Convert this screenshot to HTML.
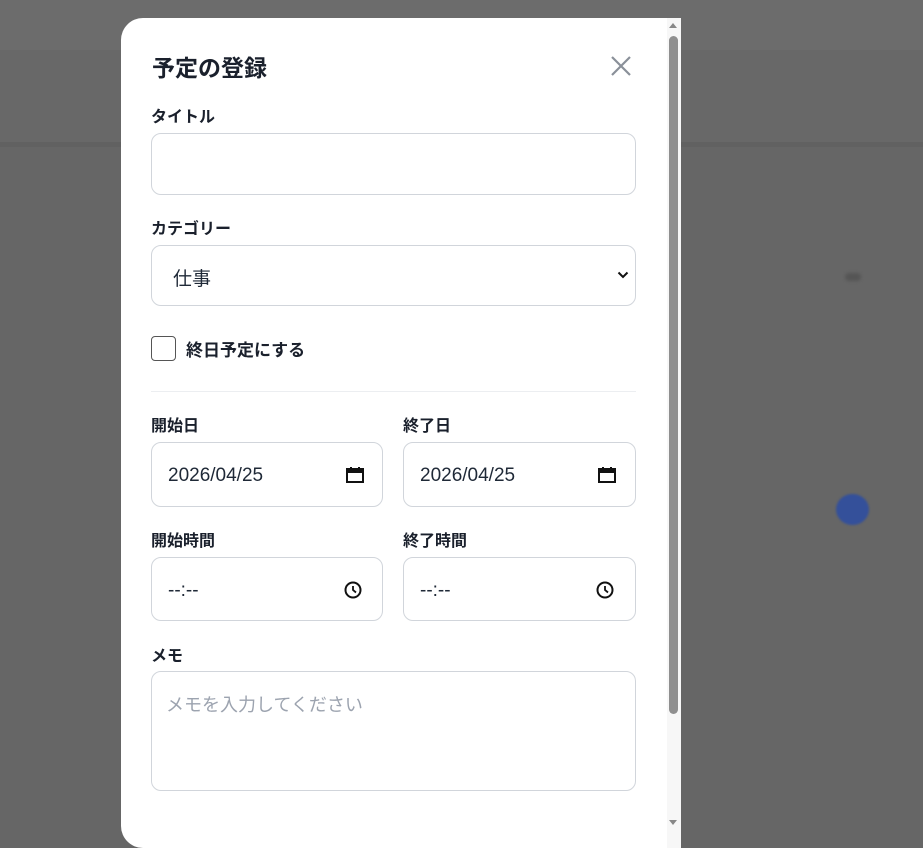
<!DOCTYPE html>
<html><head><meta charset="utf-8"><style>
*{box-sizing:border-box;margin:0;padding:0}
body{width:923px;height:830px;overflow:hidden;background:#666;font-family:"Liberation Sans","Noto Sans CJK JP",sans-serif;position:relative}
.a{position:absolute}
.modal{left:121px;top:18px;width:560px;height:830px;background:#fff;border-radius:22px 0 0 22px;overflow:hidden}
.lbl{position:absolute;font-size:16px;font-weight:bold;color:#1a202c}
.in{position:absolute;border:1px solid #d1d5db;border-radius:10px;background:#fff;font-size:19px;color:#1f2937}
</style></head><body>
<div class="a" style="left:0;top:0;width:923px;height:50px;background:#6c6c6c"></div>
<div class="a" style="left:0;top:50px;width:923px;height:92px;background:#686868"></div>
<div class="a" style="left:0;top:142px;width:923px;height:5px;background:#616161"></div>
<div class="a" style="left:836px;top:494px;width:33px;height:31px;border-radius:50%;background:#34509a;filter:blur(1px)"></div>
<div class="a" style="left:845px;top:273px;width:16px;height:8px;border-radius:4px;background:#555;filter:blur(1.5px)"></div>
<div class="a modal">
  <div class="a" style="left:31px;top:31px;font-size:23px;font-weight:bold;color:#1a202c">予定の登録</div>
  <svg class="a" style="left:489px;top:37px" width="22" height="22" viewBox="0 0 22 22"><path d="M2 2L20 20M20 2L2 20" stroke="#8a9099" stroke-width="2.2" fill="none"/></svg>
  <div class="lbl" style="left:30px;top:85px">タイトル</div>
  <div class="in" style="left:30px;top:115px;width:485px;height:62px"></div>
  <div class="lbl" style="left:30px;top:197px">カテゴリー</div>
  <div class="in" style="left:30px;top:227px;width:485px;height:61px"><span class="a" style="left:21px;top:18px">仕事</span>
   <svg class="a" style="left:465px;top:25px" width="12" height="8" viewBox="0 0 12 8"><path d="M1.5 1.5L6 6L10.5 1.5" stroke="#111" stroke-width="2" fill="none"/></svg></div>
  <div class="a" style="left:30px;top:318px;width:25px;height:25px;border:1.5px solid #555;border-radius:4px"></div>
  <div class="lbl" style="left:65px;top:318px;font-size:17px">終日予定にする</div>
  <div class="a" style="left:30px;top:373px;width:485px;height:1px;background:#eceef1"></div>
  <div class="lbl" style="left:30px;top:394px">開始日</div>
  <div class="lbl" style="left:282px;top:394px">終了日</div>
  <div class="in" style="left:30px;top:424px;width:232px;height:65px"><span class="a" style="left:16px;top:22px">2026/04/25</span>
   <svg class="a" style="left:193px;top:22px" width="20" height="20" viewBox="0 0 20 20"><rect x="2" y="4" width="16" height="13" fill="none" stroke="#111" stroke-width="2"/><rect x="2" y="4" width="16" height="4" fill="#111"/><path d="M6 2v3M14 2v3" stroke="#111" stroke-width="2"/></svg></div>
  <div class="in" style="left:282px;top:424px;width:233px;height:65px"><span class="a" style="left:16px;top:22px">2026/04/25</span>
   <svg class="a" style="left:193px;top:22px" width="20" height="20" viewBox="0 0 20 20"><rect x="2" y="4" width="16" height="13" fill="none" stroke="#111" stroke-width="2"/><rect x="2" y="4" width="16" height="4" fill="#111"/><path d="M6 2v3M14 2v3" stroke="#111" stroke-width="2"/></svg></div>
  <div class="lbl" style="left:30px;top:509px">開始時間</div>
  <div class="lbl" style="left:282px;top:509px">終了時間</div>
  <div class="in" style="left:30px;top:539px;width:232px;height:64px"><span class="a" style="left:16px;top:22px">--:--</span>
   <svg class="a" style="left:191px;top:22px" width="20" height="20" viewBox="0 0 20 20"><circle cx="10" cy="10" r="7.5" fill="none" stroke="#111" stroke-width="2"/><path d="M10 6v4l3 2.5" stroke="#111" stroke-width="1.8" fill="none"/></svg></div>
  <div class="in" style="left:282px;top:539px;width:233px;height:64px"><span class="a" style="left:16px;top:22px">--:--</span>
   <svg class="a" style="left:191px;top:22px" width="20" height="20" viewBox="0 0 20 20"><circle cx="10" cy="10" r="7.5" fill="none" stroke="#111" stroke-width="2"/><path d="M10 6v4l3 2.5" stroke="#111" stroke-width="1.8" fill="none"/></svg></div>
  <div class="lbl" style="left:30px;top:624px">メモ</div>
  <div class="in" style="left:30px;top:653px;width:485px;height:120px"><span class="a" style="left:14px;top:19px;color:#9ca3af;font-size:18px">メモを入力してください</span></div>
  <div class="a" style="left:546px;top:0;width:14px;height:830px;background:#f7f7f7"></div>
  <div class="a" style="left:548px;top:18px;width:9px;height:678px;background:#8f8f8f;border-radius:5px"></div>
  <div class="a" style="left:548px;top:5px;width:0;height:0;border-left:4px solid transparent;border-right:4px solid transparent;border-bottom:5px solid #888"></div>
  <div class="a" style="left:548px;top:802px;width:0;height:0;border-left:4px solid transparent;border-right:4px solid transparent;border-top:5px solid #888"></div>
</div>
</body></html>
